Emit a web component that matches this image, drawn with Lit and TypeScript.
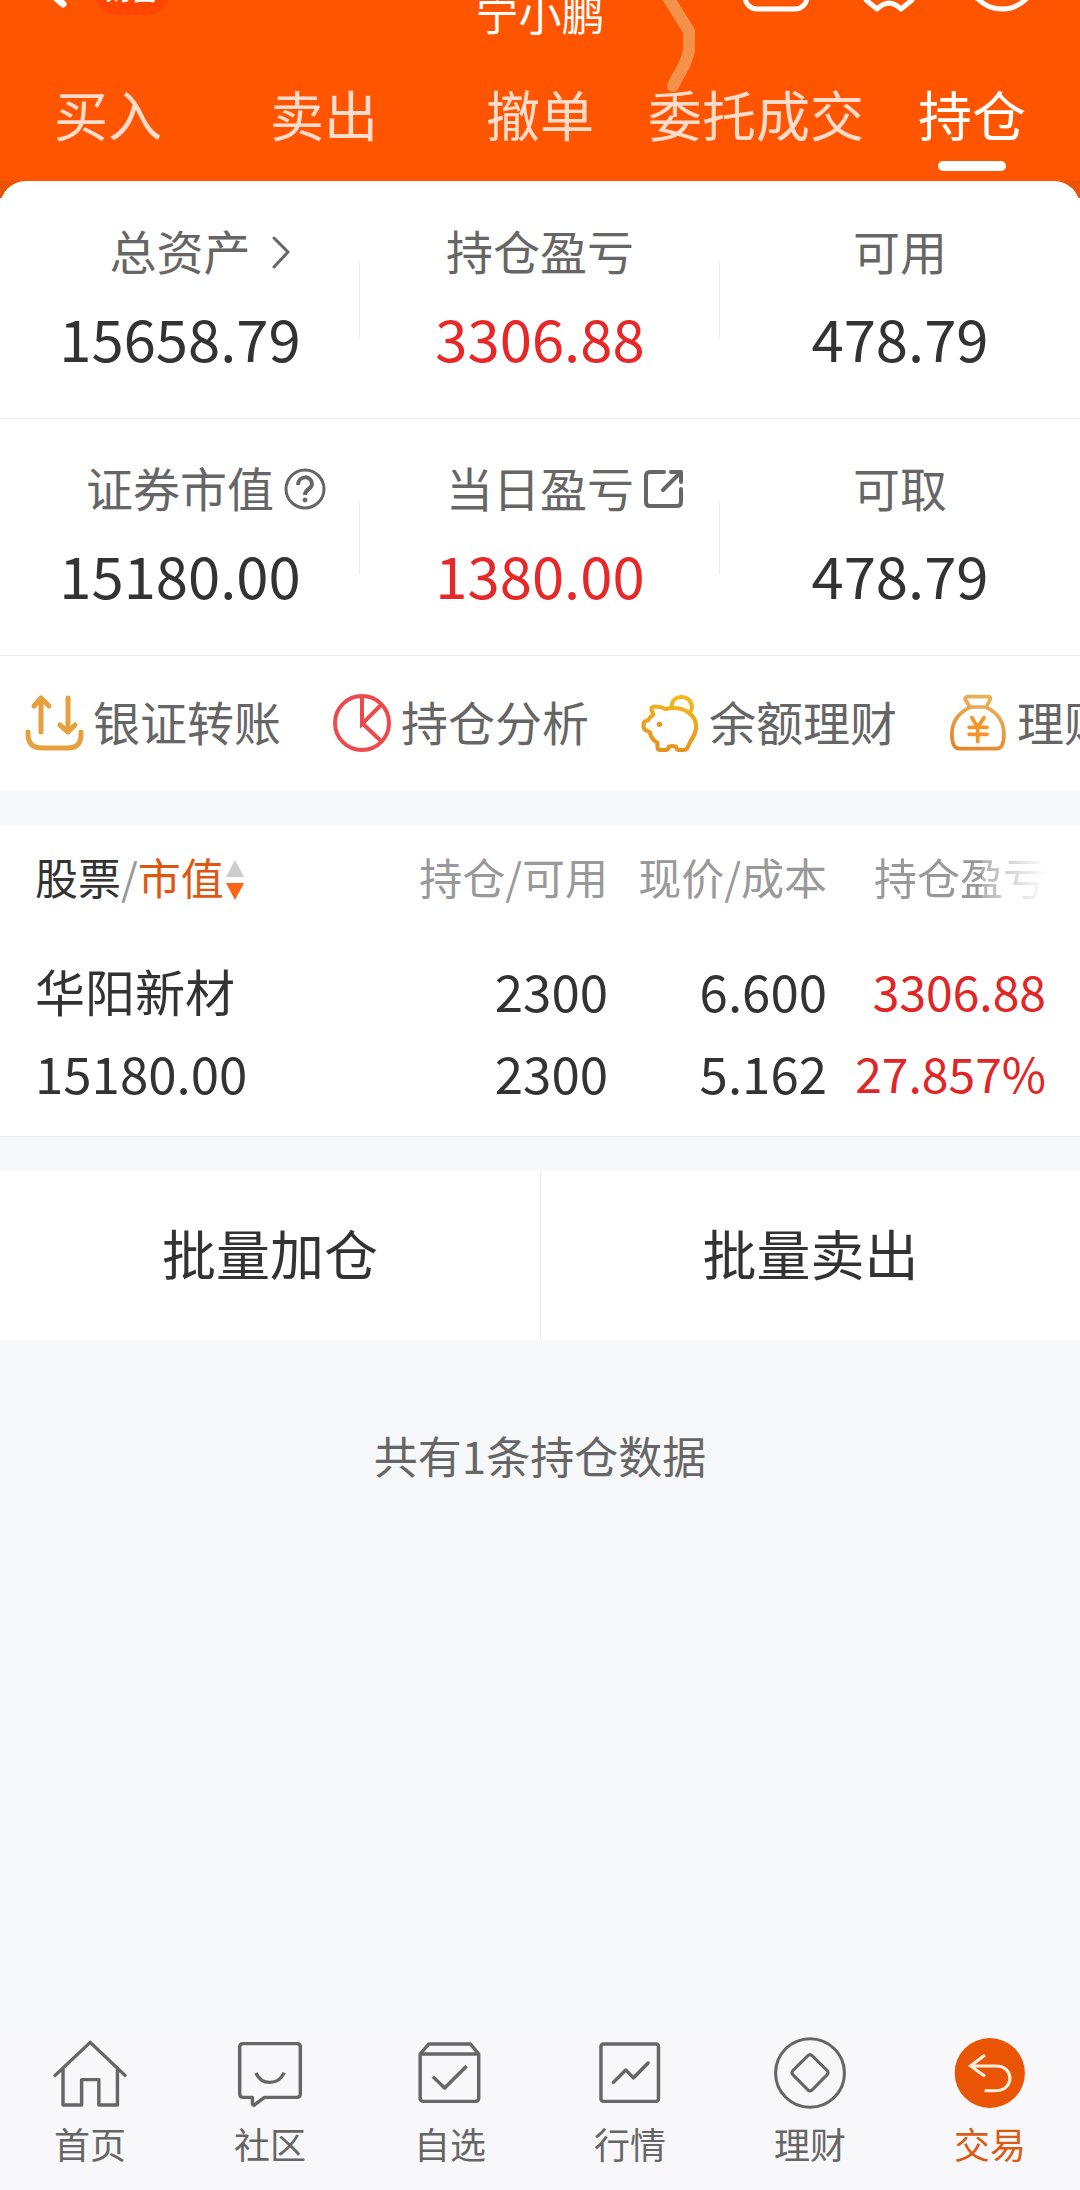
import { LitElement, html, svg, css, nothing, TemplateResult, SVGTemplateResult } from "lit";
import { customElement, property } from "lit/decorators.js";
import { classMap } from "lit/directives/class-map.js";

type IconDef = { size: number; width?: number; body: SVGTemplateResult };

// Outline icons. Each group maps its drawing grid onto the icon box.
const ICONS: Record<string, IconDef> = {
  back: {
    size: 80,
    body: svg`<path d="M60 26 L32 46 L58 69" fill="none" stroke="currentColor" stroke-width="7" stroke-linecap="round" stroke-linejoin="round"/>`,
  },
  message: {
    size: 80,
    body: svg`<rect x="9" y="20" width="62" height="54" rx="12" fill="none" stroke="currentColor" stroke-width="5"/>`,
  },
  settings: {
    size: 80,
    body: svg`<path d="M17 65 L28 74 Q40 62 52 74 L63 65 Q62 52 74 48 L74 32 Q62 28 63 15 L52 6 Q40 18 28 6 L17 15 Q18 28 6 32 L6 48 Q18 52 17 65 Z" fill="none" stroke="currentColor" stroke-width="5" stroke-linejoin="round"/>`,
  },
  more: {
    size: 80,
    body: svg`<circle cx="40" cy="40" r="34" fill="none" stroke="currentColor" stroke-width="5"/>`,
  },
  chevron: {
    size: 36,
    width: 20,
    body: svg`<path d="M3 4 L17 18 L3 33" fill="none" stroke="currentColor" stroke-width="3" stroke-linecap="round" stroke-linejoin="round"/>`,
  },
  help: {
    size: 42,
    body: svg`<g fill="none" stroke="currentColor" stroke-width="3">
      <circle cx="21" cy="21" r="19"/>
      <path d="M14 17 C14 7 28 7 28 16 C28 21 21 21 21 27" stroke-width="4"/>
      <circle cx="21" cy="32" r="2" fill="currentColor" stroke-width="1"/></g>`,
  },
  open: {
    size: 40,
    body: svg`<g fill="none" stroke="currentColor" stroke-width="4" stroke-linecap="round" stroke-linejoin="round">
      <path d="M20 3 H6 Q2 3 2 7 V33 Q2 37 6 37 H33 Q37 37 37 33 V20"/>
      <path d="M19 21 L36 4 M27 3 H37 V13"/></g>`,
  },
  transfer: {
    size: 60,
    body: svg`<g fill="none" stroke="#e8a03c" stroke-width="5" stroke-linecap="round" stroke-linejoin="round">
      <path d="M16 38 V4 M9 12 L16 4 L24 12"/>
      <path d="M43 4 V38 M35 31 L43 38 L50 31"/>
      <path d="M3 38 V40 Q3 54 17 54 H43 Q56 54 56 40 V38"/></g>`,
  },
  analysis: {
    size: 60,
    body: svg`<g fill="none" stroke="#ec4a4c" stroke-width="4">
      <circle cx="29" cy="29" r="27"/>
      <path d="M29 2 V30 L48 11 M29 29 L48 47"/></g>`,
  },
  piggy: {
    size: 60,
    body: svg`<defs><linearGradient id="pig" gradientUnits="userSpaceOnUse" x1="400" y1="110" x2="360" y2="270"><stop offset="0" stop-color="#f3b91c"/><stop offset="1" stop-color="#e8901c"/></linearGradient></defs>
      <g transform="translate(-101 -34) scale(.3444 .3333)" fill="none" stroke="url(#pig)" stroke-width="12" stroke-linejoin="round">
      <path d="M325 152 C320 140 330 138 342 140 C352 140 358 143 364 147 C392 141 413 145 429 156 C450 170 455 188 453 206 C450 226 443 236 436 246 L428 264 Q424 270 416 270 H402 Q396 270 395 260 Q384 256 374 260 Q373 270 366 270 H350 Q341 270 341 260 V248 C328 241 322 232 319 217 L306 210 Q300 206 301 197 V189 Q305 182 314 181 Q319 170 329 164 Z"/>
      <path d="M382 142 C382 120 396 111 411 111 C430 111 442 126 441 142 Q440 152 435 158"/>
      <circle cx="347" cy="193" r="8" fill="#e8961c" stroke="none"/></g>`,
  },
  bag: {
    size: 60,
    body: svg`<defs><linearGradient id="bag" gradientUnits="userSpaceOnUse" x1="1300" y1="110" x2="1240" y2="270"><stop offset="0" stop-color="#eab25a"/><stop offset="1" stop-color="#e5862c"/></linearGradient></defs>
      <g transform="translate(-409 -34) scale(.3444 .3333)" fill="none" stroke="url(#bag)" stroke-width="11" stroke-linejoin="round" stroke-linecap="round">
      <path d="M1240 110 H1304 Q1309 112 1307 118 L1296 141 H1248 L1235 118 Q1233 112 1240 110 Z"/>
      <path d="M1248 142 C1212 160 1196 190 1196 222 C1196 250 1202 266 1218 266 H1326 C1342 266 1347 250 1347 222 C1347 190 1332 160 1296 142"/>
      <path d="M1254 173 L1271 202 L1289 173 M1271 202 V245 M1246 202 H1298 M1246 223 H1298" stroke="#f2962c"/></g>`,
  },
  home: {
    size: 80,
    body: svg`<g transform="translate(-50 -13) scale(.3444 .3333)" fill="none" stroke="currentColor" stroke-width="10" stroke-linejoin="round">
      <path d="M157 169 L262 67 L366 169"/>
      <path d="M183 146 V255 H237 V179 H287 V255 H341 V146"/></g>`,
  },
  community: {
    size: 80,
    body: svg`<g transform="translate(-230 -13) scale(.3444 .3333)" fill="none" stroke="currentColor" stroke-width="10" stroke-linejoin="round">
      <path d="M706 71 H862 Q872 71 872 81 V222 Q872 232 862 232 H768 L737 256 L733 252 V232 H706 Q696 232 696 222 V81 Q696 71 706 71 Z"/>
      <path d="M743 159 C760 197 808 197 825 158"/></g>`,
  },
  watchlist: {
    size: 80,
    body: svg`<g transform="translate(-410 -13) scale(.3444 .3333)" fill="none" stroke="currentColor" stroke-width="10" stroke-linejoin="round">
      <path d="M1220 102 L1245 72 H1366 L1390 102 V234 Q1390 244 1380 244 H1230 Q1220 244 1220 234 Z M1220 102 H1390"/>
      <path d="M1257 170 L1291 204 L1355 138"/></g>`,
  },
  market: {
    size: 80,
    body: svg`<g transform="translate(-50 -13) scale(.3444 .3333)" fill="none" stroke="currentColor" stroke-width="10" stroke-linejoin="round" stroke-linecap="round">
      <rect x="177" y="72" width="167" height="172" rx="7"/>
      <path d="M213 187 L249 150 L271 174 L314 129"/></g>`,
  },
  wealth: {
    size: 80,
    body: svg`<g transform="translate(-230 -13) scale(.3444 .3333)" fill="none" stroke="currentColor" stroke-width="9" stroke-linejoin="round">
      <ellipse cx="784" cy="159" rx="100" ry="103"/>
      <path d="M778 107 Q784 101 790 107 L834 152 Q839 158 834 164 L790 210 Q784 215 778 210 L734 164 Q729 158 734 152 Z"/></g>`,
  },
  trade: {
    size: 80,
    body: svg`<g transform="translate(-410 -13) scale(.3444 .3333)" fill="none" stroke="#fff0e2" stroke-width="9">
      <ellipse cx="1306" cy="159" rx="102" ry="105" fill="#e95504" stroke="none"/>
      <path d="M1292 105 L1250 138 L1292 169 M1252 138 H1324 C1378 138 1378 212 1324 212 H1291"/></g>`,
  },
};

@customElement("app-icon")
export class AppIcon extends LitElement {
  static styles = css`
    :host {
      display: inline-flex;
      flex: none;
    }
  `;
  @property() name = "";

  render() {
    const icon = ICONS[this.name];
    if (!icon) return nothing;
    const w = icon.width ?? icon.size;
    return html`<svg width=${w} height=${icon.size} viewBox="0 0 ${w} ${icon.size}" aria-hidden="true">${icon.body}</svg>`;
  }
}

type Stat = { label: string; value: string; up?: boolean; icon?: string };

@customElement("asset-stats")
export class AssetStats extends LitElement {
  static styles = css`
    :host {
      display: block;
    }
    .row {
      display: grid;
      grid-template-columns: repeat(3, 1fr);
      margin: 0;
      border-bottom: 1px solid #ececec;
    }
    .cell {
      padding: 44px 0 51px;
      text-align: center;
    }
    .cell:not(:last-child) {
      background: linear-gradient(#ececec, #ececec) right 0 bottom 81px / 1px 74px no-repeat;
    }
    .label {
      display: grid;
      grid-template-columns: 1fr auto 1fr;
      grid-template-rows: 48px;
      align-items: center;
      margin-bottom: 33px;
      font-size: 47px;
      line-height: 48px;
      color: #666;
    }
    .hint {
      display: flex;
      grid-column: 3;
      padding: 4px 0 0 10px;
    }
    .hint.chevron {
      padding-left: 20px;
    }
    .text {
      grid-column: 2;
    }
    .value {
      margin: 0;
      font-size: 58px;
      line-height: 60px;
      color: #333;
    }
    .value.up {
      color: #e62828;
    }
  `;

  private rows: Stat[][] = [
    [
      { label: "总资产", value: "15658.79", icon: "chevron" },
      { label: "持仓盈亏", value: "3306.88", up: true },
      { label: "可用", value: "478.79" },
    ],
    [
      { label: "证券市值", value: "15180.00", icon: "help" },
      { label: "当日盈亏", value: "1380.00", up: true, icon: "open" },
      { label: "可取", value: "478.79" },
    ],
  ];

  render() {
    return this.rows.map(
      (row) => html`<dl class="row">
        ${row.map(
          (s) => html`<div class="cell">
            <dt class="label">
              <span class="text">${s.label}</span>
              ${s.icon
                ? html`<span class=${classMap({ hint: true, chevron: s.icon === "chevron" })}><app-icon name=${s.icon}></app-icon></span>`
                : nothing}
            </dt>
            <dd class=${classMap({ value: true, up: !!s.up })}>${s.value}</dd>
          </div>`
        )}
      </dl>`
    );
  }
}

@customElement("holdings-table")
export class HoldingsTable extends LitElement {
  static styles = css`
    :host {
      display: block;
      padding: 0 34px 0 35px;
      background: #fff;
      border-bottom: 1px solid #ececec;
    }
    .table {
      width: 100%;
      table-layout: fixed;
      border-collapse: collapse;
    }
    .narrow {
      width: 219px;
    }
    .head {
      padding: 29px 0 62px;
      font-size: 43px;
      font-weight: 400;
      line-height: 44px;
      text-align: right;
      white-space: nowrap;
      color: #999;
    }
    .head.first,
    .cell.first {
      text-align: left;
    }
    .head.faded {
      mask-image: linear-gradient(to left, transparent, rgba(0, 0, 0, 0.75) 64px, #000 64px);
    }
    .sort {
      display: flex;
      align-items: center;
      height: 44px;
      padding: 0;
      border: 0;
      background: none;
      font: inherit;
      color: #999;
    }
    .name {
      color: #333;
    }
    .active {
      color: #de5812;
    }
    .arrows {
      flex: none;
      margin: 8px 0 0 1px;
    }
    .cell {
      padding: 0 0 34px;
      font-size: 51px;
      line-height: 60px;
      text-align: right;
      white-space: nowrap;
      vertical-align: top;
      color: #333;
    }
    .line {
      display: block;
    }
    .line + .line {
      margin-top: 22px;
    }
    .stock {
      font-size: 50px;
    }
    .up {
      font-size: 48px;
      color: #e02626;
    }
  `;

  private holdings = [
    { name: "华阳新材", value: "15180.00", held: "2300", usable: "2300", price: "6.600", cost: "5.162", profit: "3306.88", rate: "27.857%" },
  ];

  render() {
    return html`<table class="table">
      <colgroup>
        <col />
        <col class="narrow" />
        <col class="narrow" />
        <col class="narrow" />
      </colgroup>
      <thead>
        <tr>
          <th class="head first" scope="col" aria-sort="descending">
            <button class="sort" type="button">
              <span class="name">股票</span><span>/</span><span class="active">市值</span>
              <svg class="arrows" width="20" height="40" viewBox="0 0 20 40" aria-hidden="true">
                <path d="M10 0 L19 17 H1 Z" fill="#ccc" />
                <path d="M1 23 H19 L10 40 Z" fill="#fa6414" />
              </svg>
            </button>
          </th>
          <th class="head" scope="col">持仓/可用</th>
          <th class="head" scope="col">现价/成本</th>
          <th class="head faded" scope="col">持仓盈亏</th>
        </tr>
      </thead>
      <tbody>
        ${this.holdings.map(
          (h) => html`<tr>
            <td class="cell first"><span class="line stock">${h.name}</span><span class="line">${h.value}</span></td>
            <td class="cell"><span class="line">${h.held}</span><span class="line">${h.usable}</span></td>
            <td class="cell"><span class="line">${h.price}</span><span class="line">${h.cost}</span></td>
            <td class="cell"><span class="line up">${h.profit}</span><span class="line up">${h.rate}</span></td>
          </tr>`
        )}
      </tbody>
    </table>`;
  }
}

@customElement("app-root")
export class AppRoot extends LitElement {
  static styles = css`
    :host {
      display: flex;
      flex-direction: column;
      min-height: 100vh;
      overflow: hidden;
      background: #f7f8fa;
      font-family: "Noto Sans CJK SC", "Noto Sans", sans-serif;
      color: #333;
    }
    button {
      padding: 0;
      border: 0;
      background: none;
      font: inherit;
      color: inherit;
    }
    a {
      color: inherit;
      text-decoration: none;
    }
    .header {
      position: relative;
      background: #f50;
      color: #fff;
    }
    .topbar {
      display: grid;
      grid-template-columns: 1fr auto 1fr;
      grid-template-rows: 36px;
      align-items: end;
    }
    .side {
      display: flex;
      align-items: end;
      padding: 0 22px 21px 5px;
    }
    .side.end {
      justify-content: end;
    }
    .title {
      margin: 0;
      font-size: 43px;
      font-weight: 400;
      line-height: 48px;
    }
    .tool {
      display: flex;
      justify-content: center;
      width: 113px;
    }
    .back {
      display: flex;
      padding-right: 9px;
    }
    .badge {
      padding: 4px 12px 8px;
      border-radius: 24px;
      background: #ff4600;
      font-size: 26px;
      font-style: italic;
      font-weight: 700;
      line-height: 36px;
    }
    .streak {
      position: absolute;
      top: 0;
      left: 60%;
    }
    .tabs {
      display: grid;
      grid-template-columns: repeat(5, 1fr);
    }
    .tab {
      display: flex;
      flex-direction: column;
      align-items: center;
      gap: 20px;
      padding: 51px 0 10px;
      font-size: 54px;
      line-height: 54px;
      white-space: nowrap;
      color: #ffdccc;
    }
    .tab::after {
      content: "";
      width: 68px;
      height: 10px;
      border-radius: 5px;
    }
    .tab.current {
      color: #fff;
    }
    .tab.current::after {
      background: #fff;
    }
    .summary {
      background: linear-gradient(#e95504 17px, #fff 17px);
    }
    .card {
      padding-top: 1px;
      border-radius: 26px 26px 0 0;
      background: #fff;
    }
    .actions {
      display: flex;
      gap: 52px;
      padding: 38px 0 37px 25px;
      overflow: hidden;
    }
    .action {
      display: flex;
      flex: none;
      align-items: center;
      gap: 8px;
      font-size: 47px;
      line-height: 48px;
      white-space: nowrap;
      color: #666;
    }
    .caption {
      padding-bottom: 6px;
    }
    .main {
      display: flex;
      flex: 1;
      flex-direction: column;
    }
    .holdings,
    .batch {
      margin-top: 34px;
    }
    .batch {
      display: grid;
      grid-template-columns: 1fr 1fr;
      background: #fff;
    }
    .batch-button {
      height: 169px;
      padding-bottom: 6px;
      font-size: 54px;
      line-height: 60px;
    }
    .batch-button + .batch-button {
      border-left: 1px solid #ececec;
    }
    .count {
      margin: 85px 0;
      font-size: 44px;
      line-height: 60px;
      text-align: center;
      color: #666;
    }
    .nav {
      display: grid;
      grid-template-columns: repeat(6, 1fr);
      background: #f8f8fb;
    }
    .nav-item {
      display: flex;
      flex-direction: column;
      align-items: center;
      gap: 10px;
      padding-bottom: 27px;
      font-size: 36px;
      line-height: 40px;
      color: #666;
    }
    .nav-item.current {
      color: #dc5a14;
    }
  `;

  private tabs = ["买入", "卖出", "撤单", "委托成交", "持仓"];
  private actions = [
    ["transfer", "银证转账"],
    ["analysis", "持仓分析"],
    ["piggy", "余额理财"],
    ["bag", "理财"],
  ];
  private nav = [
    ["home", "首页"],
    ["community", "社区"],
    ["watchlist", "自选"],
    ["market", "行情"],
    ["wealth", "理财"],
    ["trade", "交易"],
  ];

  private renderHeader(): TemplateResult {
    return html`<header class="header">
      <div class="topbar">
        <div class="side">
          <button class="back" type="button" aria-label="返回"><app-icon name="back"></app-icon></button>
          <span class="badge">财富</span>
        </div>
        <h1 class="title">宁小鹏</h1>
        <div class="side end">
          <button class="tool" type="button" aria-label="消息"><app-icon name="message"></app-icon></button>
          <button class="tool" type="button" aria-label="设置"><app-icon name="settings"></app-icon></button>
          <button class="tool" type="button" aria-label="更多"><app-icon name="more"></app-icon></button>
        </div>
      </div>
      <nav class="tabs">
        ${this.tabs.map((t) => html`<a class=${classMap({ tab: true, current: t === "持仓" })} href="#">${t}</a>`)}
      </nav>
      <svg class="streak" width="60" height="100" viewBox="0 0 60 100" aria-hidden="true">
        <path d="M19 -4 L41 31 V51 Q37 66 30 76 L25 86" fill="none" stroke="#f4924c" stroke-width="12" stroke-linecap="round" stroke-linejoin="bevel" />
      </svg>
    </header>`;
  }

  render() {
    return html`${this.renderHeader()}
      <main class="main">
        <div class="summary">
          <section class="card">
            <asset-stats></asset-stats>
            <div class="actions">
              ${this.actions.map(
                ([icon, label]) => html`<a class="action" href="#"><app-icon name=${icon}></app-icon><span class="caption">${label}</span></a>`
              )}
            </div>
          </section>
        </div>
        <holdings-table class="holdings"></holdings-table>
        <div class="batch">
          <button class="batch-button" type="button">批量加仓</button>
          <button class="batch-button" type="button">批量卖出</button>
        </div>
        <p class="count">共有1条持仓数据</p>
      </main>
      <nav class="nav">
        ${this.nav.map(
          ([icon, label]) => html`<a class=${classMap({ "nav-item": true, current: icon === "trade" })} href="#"><app-icon name=${icon}></app-icon>${label}</a>`
        )}
      </nav>`;
  }
}
